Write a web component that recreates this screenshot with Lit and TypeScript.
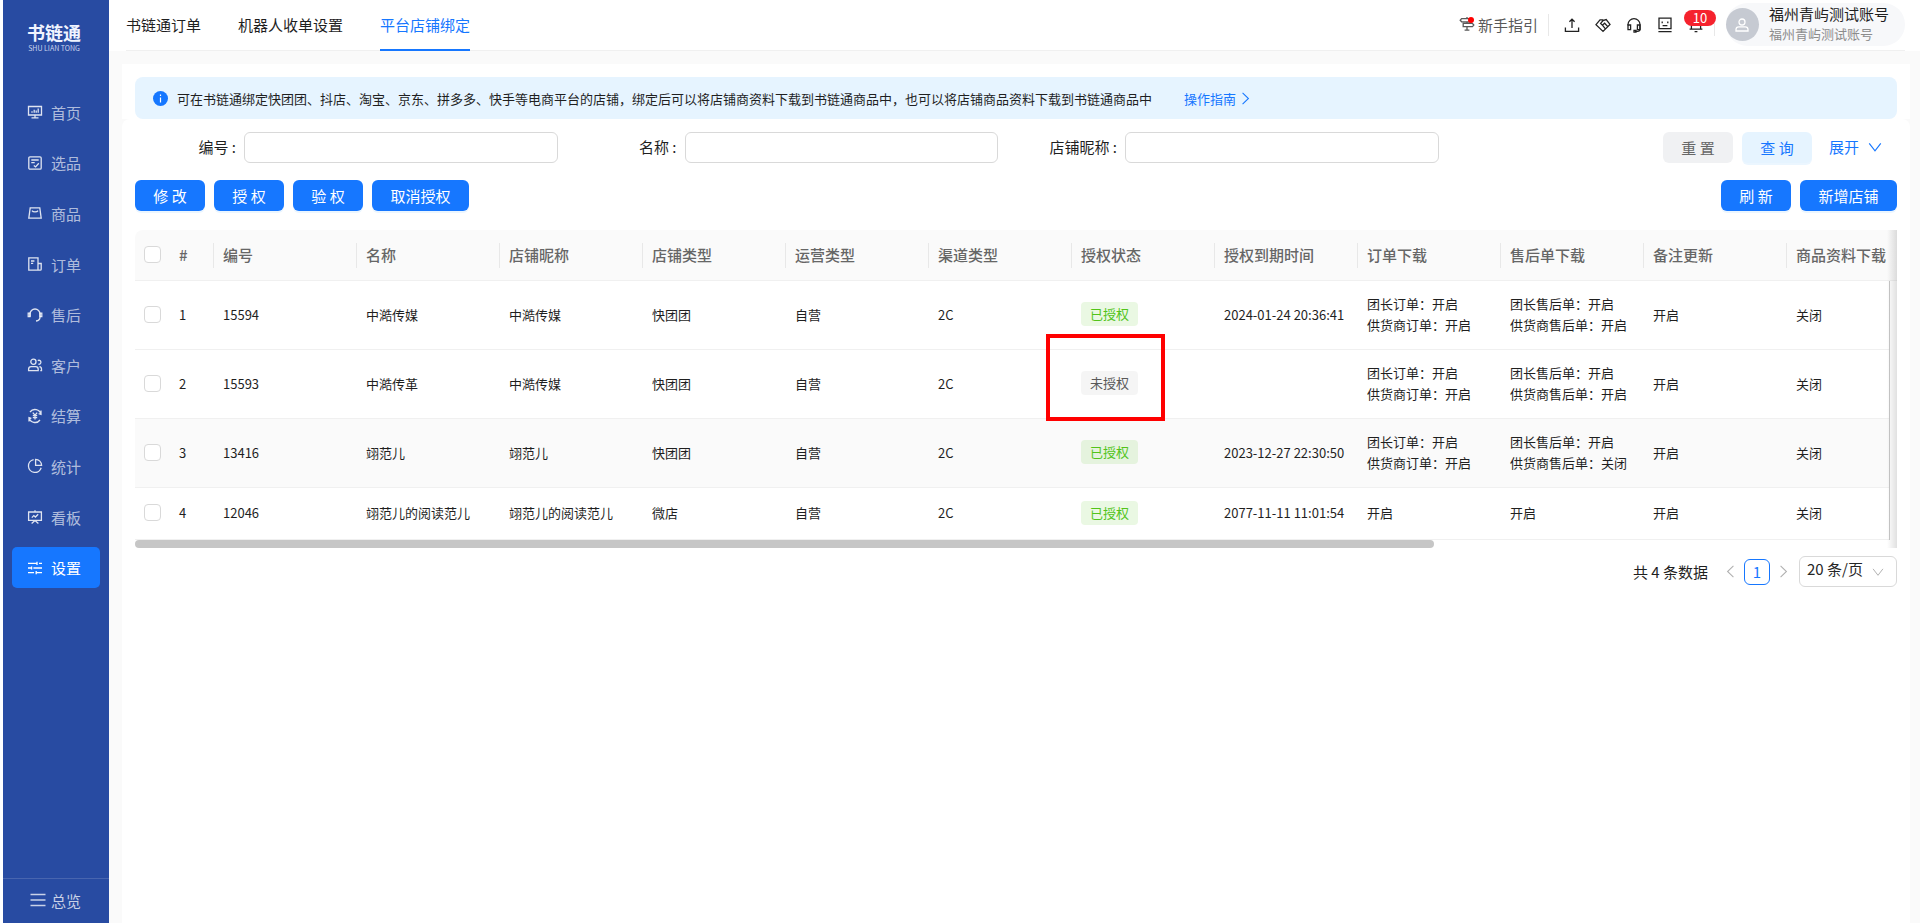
import { LitElement, html, css, svg, nothing } from "lit";
import { customElement, property, state } from "lit/decorators.js";
import { classMap } from "lit/directives/class-map.js";

const icons: Record<string, unknown> = {
  home: svg`<path d="M1.5 2.5h13v8.5h-13zM8 11v2.5M4.5 13.8h7M5 8.7V7.2M7.2 8.7V5.8M9.2 8.7V6.6M11.2 8.7V4.6"/>`,
  pick: svg`<rect x="1.8" y="1.8" width="12.4" height="12.4" rx="1.2"/><path d="M4.3 5h7.4M4.3 7.6h3.4M6.8 10.4l1.8 1.5 3.2-3.6"/>`,
  goods: svg`<path d="M3.2 2.8h9.6l1.4 10.4H1.8zM5 5.6c1 1.8 5 1.8 6 0"/>`,
  order: svg`<path d="M11 14.2H1.8V1.8H11v12.4h2.2a1 1 0 0 0 1-1V7.5H11M4 5h3.4M4 7.4h2.2"/>`,
  service: svg`<path d="M3 9.8V7a5 5 0 0 1 10 0v3c0 2.5-1.6 3.8-4 4"/><path d="M3 6.2H1.2v3.4H3zM13 6.2h1.8v3.4H13z"/>`,
  client: svg`<circle cx="6.4" cy="4.8" r="2.6"/><path d="M1.6 13.6v-1.4c0-1.6 1-2.6 2.6-2.6h4.4c1.6 0 2.6 1 2.6 2.6v1.4zM10.8 3.6a2 2 0 1 1 .6 3.6M12.4 9.6c1.4.2 2.1 1.2 2.1 2.4v1.6h-1.2"/>`,
  settle: svg`<path d="M2 9.6A6.2 6.2 0 0 0 13 12M14 6.4A6.2 6.2 0 0 0 3 4M2 13.4V9.6l2.4.8M14 2.6v3.8l-2.4-.8M5.8 4.6L8 7.2l2.2-2.6M8 7.2v4.4M5.8 7.6h4.4M5.8 9.6h4.4"/>`,
  stats: svg`<path d="M6.6 1.6a6.5 6.5 0 1 0 7.6 8.2M8.6 1.4a6 6 0 0 1 6 6h-6z"/>`,
  board: svg`<path d="M1.6 3h12.8v8.4H1.6zM8 1.2V3M8 11.4l-3.4 3M8 11.4l3.4 3M4.8 8.6l2-2 1.6 1.4 2.8-2.8"/>`,
  setting: svg`<path d="M1 3.4h8.6M12 3.4h3M10 1.8v3.2M1 8h3M6.4 8H15M4.6 6.4v3.2M1 12.6h6M9.6 12.6H15M9.2 11v3.2"/>`,
  menu: svg`<path d="M.5 2.5h15M.5 8h15M.5 13.5h15"/>`,
  guide: svg`<path d="M2.6 2.6h9.2v3.2H2.6L1.2 4.2zM13.4 7.4H4.2v3.2h9.2l1.4-1.6zM8 1v1.6M8 5.8v1.6M8 10.6V14M5.6 14.2h4.8"/>`,
  upload: svg`<path d="M1.4 10.4v4h13.2v-4M8 11V2.2M5.4 4.8L8 2.2l2.6 2.6"/>`,
  shake: svg`<path d="M8 14.4L1 7.6l4-4.8h2.8L8.4 3.4l2.8-.8L15 7.4zM8.4 3.2L5.6 6.4l1.8 1.8 2.2-2 3 3.2M7.4 8.2l2.8 3.4"/>`,
  headset: svg`<path d="M2 8.6V7.6a6 6 0 0 1 12 0v4.2c0 1.6-1 2.6-2.6 2.6H9"/><path d="M2 8h2.6v4.6H2zM11.4 8H14v4.6h-2.6zM8 13.4h2v1.8H8z"/>`,
  robot: svg`<path d="M2 1.2h12v10.4H2zM1.4 14.6h13.2M5.2 4.4v1.8M10.8 4.4v1.8M5.6 8.6h4.8"/>`,
  bell: svg`<path d="M3.4 12V7a4.6 4.6 0 0 1 9.2 0v5M1.6 12.2h12.8M6.6 14.6h2.8"/>`,
  user: svg`<circle cx="8" cy="5" r="3"/><path d="M2 14v-1.4c0-1.8 1.2-2.8 2.8-2.8h6.4c1.6 0 2.8 1 2.8 2.8V14z"/>`,
  down: svg`<path d="M1.4 3.8L8 12.4l6.6-8.6"/>`,
  left: svg`<path d="M11.6 1L4.4 8l7.2 7"/>`,
  right: svg`<path d="M4.4 1l7.2 7-7.2 7"/>`,
};

@customElement("ui-icon")
class UiIcon extends LitElement {
  @property() name = "";
  static styles = css`
    :host { display: inline-flex; width: 16px; height: 16px; flex: none; }
    svg { width: 100%; height: 100%; fill: none; stroke: currentColor; stroke-width: 1.3; }
  `;
  render() {
    return html`<svg viewBox="0 0 16 16" aria-hidden="true">${icons[this.name]}</svg>`;
  }
}

interface Shop {
  code: string;
  name: string;
  nick: string;
  type: string;
  authorized: boolean;
  expires: string;
  orders: string[];
  refunds: string[];
  marked?: boolean;
}

const menu = [
  ["home", "首页"], ["pick", "选品"], ["goods", "商品"], ["order", "订单"], ["service", "售后"],
  ["client", "客户"], ["settle", "结算"], ["stats", "统计"], ["board", "看板"], ["setting", "设置"],
];

const columns = [
  "编号", "名称", "店铺昵称", "店铺类型", "运营类型", "渠道类型",
  "授权状态", "授权到期时间", "订单下载", "售后单下载", "备注更新", "商品资料下载",
];

const shops: Shop[] = [
  { code: "15594", name: "中澔传媒", nick: "中澔传媒", type: "快团团", authorized: true, expires: "2024-01-24 20:36:41",
    orders: ["团长订单：开启", "供货商订单：开启"], refunds: ["团长售后单：开启", "供货商售后单：开启"] },
  { code: "15593", name: "中澔传革", nick: "中澔传媒", type: "快团团", authorized: false, expires: "", marked: true,
    orders: ["团长订单：开启", "供货商订单：开启"], refunds: ["团长售后单：开启", "供货商售后单：开启"] },
  { code: "13416", name: "翊范儿", nick: "翊范儿", type: "快团团", authorized: true, expires: "2023-12-27 22:30:50",
    orders: ["团长订单：开启", "供货商订单：开启"], refunds: ["团长售后单：开启", "供货商售后单：关闭"] },
  { code: "12046", name: "翊范儿的阅读范儿", nick: "翊范儿的阅读范儿", type: "微店", authorized: true, expires: "2077-11-11 11:01:54",
    orders: ["开启"], refunds: ["开启"] },
];

@customElement("app-root")
class AppRoot extends LitElement {
  @state() private hovered = 2;

  static styles = css`
    * { box-sizing: border-box; }
    :host {
      display: flex;
      min-height: 100vh;
      padding-left: 3px;
      background: #fff;
      color: #1f1f1f;
      font: 15px/21px "Noto Sans CJK SC", sans-serif;
    }
    a { color: inherit; text-decoration: none; }
    button, input, select { font: inherit; color: inherit; }

    .side {
      flex: none;
      width: 106px;
      display: flex;
      flex-direction: column;
      background: #284ba2;
      color: rgba(255, 255, 255, 0.65);
    }
    .logo {
      height: 87px;
      padding: 20px 4px 0 0;
      text-align: center;
      color: #f0f4ff;
    }
    .logo-name { font-size: 18px; line-height: 24px; font-weight: 700; }
    .logo-sub { font-size: 7px; line-height: 8px; color: #c9d4ee; }
    .menu { display: grid; grid-auto-rows: 1fr; height: 506px; }
    .item {
      display: flex;
      align-items: center;
      gap: 8px;
      margin: 5px 9px;
      padding-left: 15px;
      border-radius: 5px;
    }
    .item ui-icon { color: rgba(255, 255, 255, 0.85); }
    .item.active, .item.active ui-icon { color: #fff; }
    .item.active { background: #1677ff; }
    .overview {
      margin-top: auto;
      height: 45px;
      display: flex;
      align-items: center;
      gap: 5px;
      padding: 0 0 2px 27px;
      border-top: 1px solid rgba(255, 255, 255, 0.15);
      color: rgba(255, 255, 255, 0.75);
    }

    .main { flex: 1; min-width: 0; display: flex; flex-direction: column; background: #fafafa; }
    .top { background: #fff; padding: 0 15px 0 17px; }
    .top-inner { display: flex; align-items: stretch; height: 51px; border-bottom: 1px solid #f0f0f0; }
    .tabs { display: flex; gap: 37px; flex: 1; }
    .tab { display: flex; align-items: center; height: 51px; padding-bottom: 1px; border-bottom: 2px solid transparent; }
    .tab.active { color: #1677ff; border-color: #1677ff; }
    .tools { display: flex; align-items: center; }
    .guide { position: relative; display: flex; align-items: center; gap: 3px; color: #595959; padding: 0 10px 2px 0; }
    .dot { position: absolute; left: 9px; top: 3px; width: 6px; height: 6px; border-radius: 50%; background: #f00; }
    .quick {
      display: flex;
      align-items: center;
      gap: 15px;
      height: 22px;
      margin-right: 11px;
      padding: 0 10px 0 15px;
      border: solid #e8e8e8;
      border-width: 0 1px;
      color: #222;
    }
    .tool { position: relative; display: flex; padding: 0; border: 0; background: none; }
    .badge {
      position: absolute;
      left: -4px;
      top: -7px;
      width: 32px;
      height: 16px;
      border-radius: 8px;
      background: #f5222d;
      color: #fff;
      font-size: 13px;
      line-height: 16px;
      text-align: center;
    }
    .account {
      display: flex;
      align-items: center;
      gap: 10px;
      height: 43px;
      margin-top: -1px;
      padding-right: 16px;
      border-radius: 22px;
      background: #f7f8fa;
    }
    .avatar {
      display: flex;
      align-items: center;
      justify-content: center;
      width: 33px;
      height: 33px;
      border-radius: 50%;
      background: #c6cad2;
      color: #fff;
    }
    .who { padding-bottom: 2px; }
    .who small { display: block; font-size: 13px; line-height: 20px; color: #8c8c8c; }

    .content { flex: 1; display: flex; flex-direction: column; padding: 13px 10px 0 13px; }
    .notice-wrap { background: #fff; padding: 13px 13px 0; }
    .notice {
      display: flex;
      align-items: center;
      height: 42px;
      padding: 0 18px;
      border-radius: 8px;
      background: #e6f4ff;
      font-size: 13px;
    }
    .info { flex: none; width: 15px; height: 15px; margin-right: 9px; }
    .notice a { display: flex; align-items: center; gap: 3px; margin-left: 32px; color: #1677ff; }
    .notice a ui-icon { width: 13px; height: 13px; }

    .panel { flex: 1; padding: 13px; border-radius: 8px 8px 0 0; background: #fff; }
    .filters { display: grid; grid-template-columns: repeat(4, 1fr); }
    .field { display: flex; align-items: center; padding-right: 18px; }
    .field label { width: 109px; padding: 0 8px 2px 0; text-align: right; }
    .field input {
      flex: 1;
      min-width: 0;
      height: 31px;
      padding: 0 12px;
      border: 1px solid #d9d9d9;
      border-radius: 6px;
      background: #fff;
    }
    .row { display: flex; gap: 9px; }
    .row.end { justify-content: flex-end; }
    .bar { margin: 17px 0 19px; }
    .push { margin-left: auto; }
    .btn {
      display: inline-flex;
      align-items: center;
      justify-content: center;
      gap: 9px;
      height: 31px;
      min-width: 70px;
      padding: 0 16px 1px;
      border: 0;
      border-radius: 6px;
      white-space: pre;
      background: #1677ff;
      color: #fff;
      box-shadow: 0 2px 0 rgba(5, 145, 255, 0.08);
    }
    .btn.wide { min-width: 97px; }
    .btn.grey { background: #f0f1f3; color: #666; box-shadow: none; }
    .btn.soft { background: #e6f4ff; color: #1677ff; }
    .btn.link { min-width: 76px; padding: 0 15px 2px 8px; background: none; color: #1677ff; box-shadow: none; }
    .btn.link ui-icon { width: 14px; height: 14px; }

    .grid { position: relative; overflow: hidden; border-radius: 8px 0 0 0; }
    table { width: 1795px; table-layout: fixed; border-collapse: separate; border-spacing: 0; }
    .c-check { width: 35px; }
    .c-index { width: 44px; }
    .c-data { width: 143px; }
    th {
      position: relative;
      height: 51px;
      padding: 0 9px 1px;
      border-bottom: 1px solid #f0f0f0;
      background: #fafafa;
      color: #666;
      font-weight: 500;
      text-align: left;
      white-space: nowrap;
    }
    th.split::after { content: ""; position: absolute; right: 0; top: 13px; width: 1px; height: 25px; background: #e8e8e8; }
    td {
      height: 52px;
      padding: 12px 9px 14px;
      border-bottom: 1px solid #f0f0f0;
      font-size: 13px;
      white-space: nowrap;
    }
    tr:last-child td { padding: 0 9px 2px; }
    tr.hover td { background: #fafafa; }
    .check {
      appearance: none;
      display: block;
      width: 17px;
      height: 17px;
      margin: 0;
      border: 1px solid #d9d9d9;
      border-radius: 4px;
      background: #fff;
    }
    .state { position: relative; display: inline-block; vertical-align: middle; }
    .tag { display: block; padding: 0 9px; line-height: 24px; border-radius: 4px; background: rgba(0, 0, 0, 0.04); color: #595959; }
    .tag.ok { background: rgba(82, 196, 26, 0.12); color: #52c41a; }
    .mark { position: absolute; z-index: 1; left: -35px; top: -37px; width: 119px; height: 87px; border: 4px solid #f00; outline: 1px solid rgba(255, 0, 0, 0.3); outline-offset: -1px; }
    .edge { position: absolute; right: 0; top: 0; bottom: 0; width: 10px; background: linear-gradient(to right, rgba(0, 0, 0, 0), rgba(0, 0, 0, 0.12)); }
    .pinned { position: absolute; right: 0; top: 51px; bottom: 8px; width: 8px; border-left: 1px solid #c8c8c8; background: #fff; }
    .track { height: 8px; }
    .thumb { height: 8px; border-radius: 4px; background: #c6c6c6; }

    .pager { display: flex; align-items: center; justify-content: flex-end; margin-top: 8px; }
    .total { margin-right: 13px; }
    .step { display: flex; padding: 0 3px; border: 0; background: none; color: #b0b0b0; }
    .step ui-icon { width: 13px; height: 13px; }
    .page { width: 26px; height: 26px; margin: 0 4px; padding: 0; border: 1px solid #1677ff; border-radius: 6px; background: #fff; color: #1677ff; }
    .size { position: relative; margin-left: 6px; color: #262626; }
    .size select {
      appearance: none;
      display: block;
      width: 98px;
      height: 31px;
      padding: 0 7px 6px;
      border: 1px solid #d9d9d9;
      border-radius: 6px;
      background: #fff;
    }
    .size ui-icon { position: absolute; right: 13px; top: 10px; width: 12px; height: 12px; color: #b0b0b0; pointer-events: none; }
  `;

  private shopRow(s: Shop, i: number) {
    return html`
      <tr class=${classMap({ hover: this.hovered === i })}>
        <td><input class="check" type="checkbox" aria-label="选择 ${s.code}" /></td>
        <td>${i + 1}</td>
        <td>${s.code}</td>
        <td>${s.name}</td>
        <td>${s.nick}</td>
        <td>${s.type}</td>
        <td>自营</td>
        <td>2C</td>
        <td>
          <span class="state">
            <span class=${classMap({ tag: true, ok: s.authorized })}>${s.authorized ? "已授权" : "未授权"}</span>
            ${s.marked ? html`<span class="mark"></span>` : nothing}
          </span>
        </td>
        <td>${s.expires}</td>
        <td>${s.orders.map((t) => html`<div>${t}</div>`)}</td>
        <td>${s.refunds.map((t) => html`<div>${t}</div>`)}</td>
        <td>开启</td>
        <td>关闭</td>
      </tr>
    `;
  }

  render() {
    return html`
      <aside class="side">
        <div class="logo">
          <div class="logo-name">书链通</div>
          <div class="logo-sub">SHU LIAN TONG</div>
        </div>
        <nav class="menu">
          ${menu.map(([icon, label]) => html`
            <a href="#" class=${classMap({ item: true, active: icon === "setting" })}>
              <ui-icon name=${icon}></ui-icon>${label}
            </a>`)}
        </nav>
        <a href="#" class="overview"><ui-icon name="menu"></ui-icon>总览</a>
      </aside>

      <div class="main">
        <header class="top">
          <div class="top-inner">
            <nav class="tabs">
              <a href="#" class="tab">书链通订单</a>
              <a href="#" class="tab">机器人收单设置</a>
              <a href="#" class="tab active">平台店铺绑定</a>
            </nav>
            <div class="tools">
              <a href="#" class="guide"><ui-icon name="guide"></ui-icon>新手指引<span class="dot"></span></a>
              <div class="quick">
                <button class="tool" aria-label="上传"><ui-icon name="upload"></ui-icon></button>
                <button class="tool" aria-label="合作"><ui-icon name="shake"></ui-icon></button>
                <button class="tool" aria-label="客服"><ui-icon name="headset"></ui-icon></button>
                <button class="tool" aria-label="机器人"><ui-icon name="robot"></ui-icon></button>
                <button class="tool" aria-label="通知"><ui-icon name="bell"></ui-icon><span class="badge">10</span></button>
              </div>
              <div class="account">
                <span class="avatar"><ui-icon name="user"></ui-icon></span>
                <span class="who">福州青屿测试账号<small>福州青屿测试账号</small></span>
              </div>
            </div>
          </div>
        </header>

        <main class="content">
          <div class="notice-wrap">
            <div class="notice">
              <svg class="info" viewBox="0 0 15 15" aria-hidden="true">
                <circle cx="7.5" cy="7.5" r="7.5" fill="#1677ff"></circle>
                <path d="M7.5 6.4v5M7.5 3.6v1.4" stroke="#fff" stroke-width="1.2"></path>
              </svg>
              <span>可在书链通绑定快团团、抖店、淘宝、京东、拼多多、快手等电商平台的店铺，绑定后可以将店铺商资料下载到书链通商品中，也可以将店铺商品资料下载到书链通商品中</span>
              <a href="#">操作指南<ui-icon name="right"></ui-icon></a>
            </div>
          </div>

          <section class="panel">
            <form class="filters">
              <div class="field"><label for="code">编号 :</label><input id="code" type="text" /></div>
              <div class="field"><label for="name">名称 :</label><input id="name" type="text" /></div>
              <div class="field"><label for="nick">店铺昵称 :</label><input id="nick" type="text" /></div>
              <div class="row end">
                <button type="reset" class="btn grey">重 置</button>
                <button type="button" class="btn soft">查 询</button>
                <button type="button" class="btn link">展开<ui-icon name="down"></ui-icon></button>
              </div>
            </form>

            <div class="row bar">
              <button class="btn">修 改</button>
              <button class="btn">授 权</button>
              <button class="btn">验 权</button>
              <button class="btn wide">取消授权</button>
              <button class="btn push">刷 新</button>
              <button class="btn wide">新增店铺</button>
            </div>

            <div class="grid">
              <table>
                <colgroup>
                  <col class="c-check" /><col class="c-index" />
                  ${columns.map(() => html`<col class="c-data" />`)}
                </colgroup>
                <thead>
                  <tr>
                    <th><input class="check" type="checkbox" aria-label="全选" /></th>
                    <th class="split">#</th>
                    ${columns.map((c) => html`<th class="split">${c}</th>`)}
                  </tr>
                </thead>
                <tbody>${shops.map((s, i) => this.shopRow(s, i))}</tbody>
              </table>
              <div class="track"><div class="thumb" style="width:${(1762 / 2390) * 100}%"></div></div>
              <div class="pinned"></div>
              <div class="edge"></div>
            </div>

            <div class="pager">
              <span class="total">共 4 条数据</span>
              <button class="step" aria-label="上一页"><ui-icon name="left"></ui-icon></button>
              <button class="page">1</button>
              <button class="step" aria-label="下一页"><ui-icon name="right"></ui-icon></button>
              <div class="size">
                <select aria-label="每页条数"><option>20 条/页</option><option>50 条/页</option></select>
                <ui-icon name="down"></ui-icon>
              </div>
            </div>
          </section>
        </main>
      </div>
    `;
  }
}
